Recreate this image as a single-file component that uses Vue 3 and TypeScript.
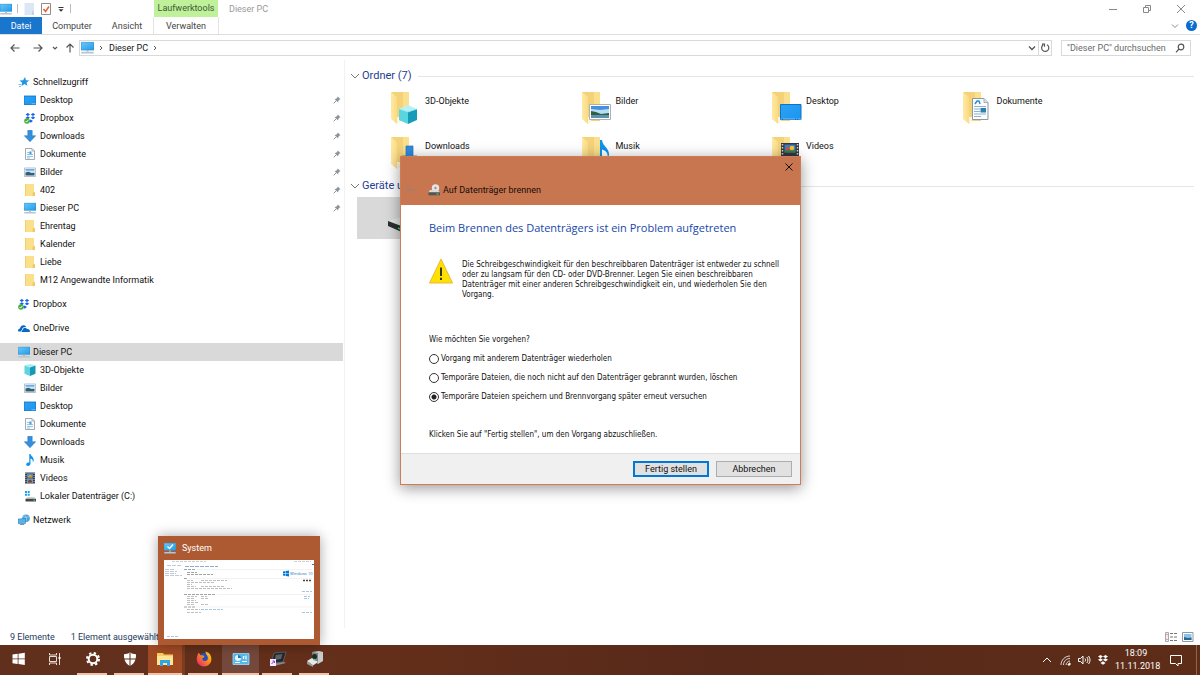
<script setup lang="ts">
import { ref } from 'vue'

interface TreeItem {
  label: string
  icon: string
  root?: boolean
  gap?: boolean
  pinned?: boolean
  selected?: boolean
}

const tree: TreeItem[] = [
  { label: 'Schnellzugriff', icon: 'star', root: true },
  { label: 'Desktop', icon: 'desktop', pinned: true },
  { label: 'Dropbox', icon: 'dropbox', pinned: true },
  { label: 'Downloads', icon: 'download', pinned: true },
  { label: 'Dokumente', icon: 'document', pinned: true },
  { label: 'Bilder', icon: 'picture', pinned: true },
  { label: '402', icon: 'folder', pinned: true },
  { label: 'Dieser PC', icon: 'pc', pinned: true },
  { label: 'Ehrentag', icon: 'folder' },
  { label: 'Kalender', icon: 'folder' },
  { label: 'Liebe', icon: 'folder' },
  { label: 'M12 Angewandte Informatik', icon: 'folder' },
  { label: 'Dropbox', icon: 'dropbox', root: true, gap: true },
  { label: 'OneDrive', icon: 'onedrive', root: true, gap: true },
  { label: 'Dieser PC', icon: 'pc', root: true, gap: true, selected: true },
  { label: '3D-Objekte', icon: 'cube' },
  { label: 'Bilder', icon: 'picture' },
  { label: 'Desktop', icon: 'desktop' },
  { label: 'Dokumente', icon: 'document' },
  { label: 'Downloads', icon: 'download' },
  { label: 'Musik', icon: 'music' },
  { label: 'Videos', icon: 'video' },
  { label: 'Lokaler Datenträger (C:)', icon: 'drive' },
  { label: 'Netzwerk', icon: 'network', root: true, gap: true },
]

const folders = [
  { label: '3D-Objekte', icon: 'big-cube' },
  { label: 'Bilder', icon: 'big-picture' },
  { label: 'Desktop', icon: 'big-desktop' },
  { label: 'Dokumente', icon: 'big-document' },
  { label: 'Downloads', icon: 'big-download' },
  { label: 'Musik', icon: 'big-music' },
  { label: 'Videos', icon: 'big-video' },
]

const apps = [
  { label: 'Einstellungen', icon: 'gear', state: 'open' },
  { label: 'Windows Defender', icon: 'shield', state: 'open' },
  { label: 'Explorer', icon: 'explorer', state: 'open hot' },
  { label: 'Firefox', icon: 'firefox', state: 'open' },
  { label: 'System', icon: 'control', state: 'open lit' },
  { label: 'Tablet', icon: 'tablet', state: 'open' },
  { label: 'Brenner', icon: 'burner', state: 'open' },
]

const options = [
  'Vorgang mit anderem Datenträger wiederholen',
  'Temporäre Dateien, die noch nicht auf den Datenträger gebrannt wurden, löschen',
  'Temporäre Dateien speichern und Brennvorgang später erneut versuchen',
]
const choice = ref(2)
const query = ref('')
</script>

<template>
  <div class="screen">
    <svg class="defs" aria-hidden="true">
      <defs>
        <linearGradient id="g-blue" x1="0" y1="0" x2="1" y2="1">
          <stop offset="0" stop-color="#2ba2f5" /><stop offset="1" stop-color="#1b95ef" />
        </linearGradient>
        <linearGradient id="g-pc" x1="0" y1="0" x2="1" y2="1">
          <stop offset="0" stop-color="#6cc8fa" /><stop offset="1" stop-color="#1e9bea" />
        </linearGradient>
        <linearGradient id="g-flap" x1="0" y1="0" x2="1" y2="0">
          <stop offset="0" stop-color="#ffe9a2" /><stop offset="1" stop-color="#fadb85" />
        </linearGradient>
        <linearGradient id="g-fox" x1="1" y1="0" x2="0" y2="1">
          <stop offset="0" stop-color="#ffe226" /><stop offset=".45" stop-color="#ff8a16" /><stop offset="1" stop-color="#e31587" />
        </linearGradient>
      </defs>
      <symbol id="star" viewBox="0 0 12 12"><path d="M7 1l1 3.2 3.3.2-2.7 2 .8 3.4-2.900-1.900L3.500 10l.6-3.200L1.500 4.500l3.600-.2z" fill="#2196e8" /><path d="M.5 8.500h3M1 10.500h2" stroke="#7fc0f0" /></symbol>
      <symbol id="desktop" viewBox="0 0 12 12"><rect y="2" width="12" height="8.500" fill="url(#g-blue)" /><path d="M0 2h12v8.500H0z" fill="none" stroke="#0a6fc2" stroke-width=".8" /><path d="M7.500 9.700h4" stroke="#a9dcff" stroke-width=".6" /></symbol>
      <symbol id="dropbox" viewBox="0 0 12 12"><path d="M3.800 1l2.200 1.500-2.200 1.400L1.600 2.500zM9 1l2.200 1.500L9 3.900 6.800 2.500zM3.800 4.200L6 5.700 3.800 7.200 1.600 5.700zM9 4.200l2.200 1.500L9 7.200 6.800 5.700zM6.600 7.600L9 9 6.600 10.800 4.800 9z" fill="#1561f5" /><circle cx="3" cy="9" r="2.800" fill="#45ae3d" /><path d="M1.600 9l1 1.100 1.800-2.300" stroke="#fff" fill="none" stroke-width=".9" /></symbol>
      <symbol id="download" viewBox="0 0 12 12"><path d="M3.800.3h4.400v5.400h3.500L6 11.800.3 5.700h3.500z" fill="#348fdd" stroke="#2374bd" stroke-width=".5" /></symbol>
      <symbol id="document" viewBox="0 0 12 12"><path d="M1.500.5h6.500l2.500 2.500v8.500h-9z" fill="#f8fafb" stroke="#8e979d" stroke-width=".8" /><path d="M8 .5V3h2.500" fill="none" stroke="#8e979d" stroke-width=".6" /><path d="M3 4.500h3M3 6.500h6M3 8.500h6M3 10h3" stroke="#8cc3e4" stroke-width=".9" /><path d="M5.500 3.500h2v3h-2z" fill="#4a9fd3" /></symbol>
      <symbol id="picture" viewBox="0 0 12 12"><path d="M.4 2h11.200v8.500H.4z" fill="#fff" stroke="#a7adb3" stroke-width=".8" /><path d="M1.500 3.200h9v6.200h-9z" fill="#cbe5fa" /><path d="M1.500 3.200h9v1.300h-9z" fill="#4d9de5" /><path d="M1.500 6.500l3-.8 3 1.300 3-.3v2.700h-9z" fill="#335f72" /></symbol>
      <symbol id="folder" viewBox="0 0 12 12"><path d="M1 0h9v8l1 1v3H1z" fill="#fbe08c" /><path d="M10 7.500l1 1V12h-2.500V9z" fill="#efc964" /><path d="M1 0h1v12H1z" fill="#f2cf72" /></symbol>
      <symbol id="pc" viewBox="0 0 12 12"><path d="M0 1h12v7.500H0z" fill="url(#g-pc)" /><path d="M.2 1.200h11.600v7.100H.2z" stroke="#3183b8" stroke-width=".4" fill="none" /><path d="M5 8.500h2v1.200H5z" fill="#9db4c4" /><path d="M.5 10h11l.5 1.500H0z" fill="#b7c5d0" /></symbol>
      <symbol id="onedrive" viewBox="0 0 12 12"><path d="M.3 9.500C-.4 7.700.7 6.600 2 6.500 2.200 4 4.800 2.500 7 3.800c.8.500 1 .9 1.200 1.200C5.800 4.600 4 5.900 4 8c-1.200.4-1.200 1.200-1 1.500z" fill="#0868c4" /><path d="M3.800 10c-.8-1.200 0-2 1-2.100C5 5.700 7.800 5 9 7c1.900-.3 2.800.9 2.900 1.900.1.700-.3 1.100-.8 1.100z" fill="#0868c4" /></symbol>
      <symbol id="cube" viewBox="0 0 12 12"><path d="M.5 1.500L6 0l5.500 1.500L6 3.500z" fill="#a9edf2" /><path d="M.5 1.500L6 3.500V12L.5 9.800z" fill="#5fd3df" /><path d="M11.500 1.500L6 3.500V12l5.500-2.200z" fill="#1599b4" /></symbol>
      <symbol id="music" viewBox="0 0 12 12"><path d="M5.300 0h1.200c.2 2 3.300 2.900 3.200 6.200-.1 1-.4 1.700-.9 2.300.4-2.500-.7-3.500-2.300-4V9.500c0 1.300-1.100 2.400-2.500 2.400-1.300 0-2-.9-1.800-1.900.3-1.100 1.800-1.900 3.100-1.500z" fill="#0c94ec" /></symbol>
      <symbol id="video" viewBox="0 0 12 12"><path d="M1 .5h10v11H1z" fill="#3c4147" /><path d="M1.900 1v10M10.100 1v10" stroke="#c8ccd0" stroke-width="1" stroke-dasharray="1 1" /><path d="M3 1.200h6v4.300H3z" fill="#4f88c6" /><path d="M3 6.300h6V11H3z" fill="#7a94b5" /><path d="M4 4l2-1.500 2 1.500v1.500H4z" fill="#c9a435" /><path d="M4 9l2-1.500 2 1.500v1.500H4z" fill="#6d4c37" /></symbol>
      <symbol id="drive" viewBox="0 0 12 12"><path d="M1 1h2v2H1zM3.700 1h2v2h-2zM1 3.700h2v2H1zM3.700 3.700h2v2h-2z" fill="#15a3f0" /><path d="M3 7h7.500l1.500 2.300H1.500z" fill="#cfd3d5" /><path d="M1.500 8.800H12v2.700H1.500z" fill="#42474a" /><path d="M9.500 10.200h1.500" stroke="#3eea68" /></symbol>
      <symbol id="network" viewBox="0 0 12 12"><circle cx="8" cy="4.200" r="3.800" fill="#4e9fd4" /><path d="M5 2.500c2 1.500 4 .5 6 .2M6.500 1c3 3 2 5 1 6.500" stroke="#bfe2f7" stroke-width=".6" fill="none" /><path d="M0 5l7.500-.5v5L0 9.500z" fill="#52b4ee" stroke="#2b75a8" stroke-width=".5" /><path d="M1.500 11h5l-.8-1.500H2.500z" fill="#7a97aa" /></symbol>

      <symbol id="big-folder" viewBox="0 0 32 34"><path d="M2 1h18v29H7z" fill="#f3d27a" /><path d="M14 1h6v17l-6 10z" fill="#fbdf8d" /><path d="M8 26h3v5l-3 2z" fill="#fdf5dd" /><path d="M2 1l6 5v27l-6-5z" fill="url(#g-flap)" /></symbol>
      <symbol id="big-cube" viewBox="0 0 32 34"><path d="M10 18l9-4 9 4-9 3z" fill="#b8f1f3" /><path d="M10 18l9 3v12l-9-4z" fill="#59d5df" /><path d="M28 18l-9 3v12l9-4z" fill="#169bb8" /><path d="M10 18l9 3 9-3" stroke="#8de9ef" fill="none" stroke-width=".7" /></symbol>
      <symbol id="big-picture" viewBox="0 0 32 34"><path d="M9.500 13.500h21v15h-21z" fill="#fff" stroke="#b0b0b0" /><path d="M11 15h18v12H11z" fill="#b9dcf5" /><path d="M11 15h18v3l-9 1-9-1z" fill="#4591dc" /><path d="M11 20l5 1 5 2 8-1v2H11z" fill="#31603f" /><path d="M11 24h18v3H11z" fill="#5c93b4" /></symbol>
      <symbol id="big-desktop" viewBox="0 0 32 34"><path d="M10.500 13.500h20.500v15H10.500z" fill="url(#g-blue)" stroke="#0a73ca" /><path d="M11 28h20" stroke="#b8dcf4" stroke-dasharray="1 1 12 1" stroke-width=".6" /></symbol>
      <symbol id="big-document" viewBox="0 0 32 34"><path d="M11.500 7.500H23l4 4v17H11.500z" fill="#fbfcfd" stroke="#8e979d" /><path d="M23 7.500v4h4" fill="#dde5ea" stroke="#8e979d" stroke-width=".7" /><path d="M14 13l2-3h2l1 3" stroke="#318ad0" fill="none" stroke-width="1.500" /><path d="M13 15.500h12M13 18h6M13 20.500h6M13 23h12M13 25.500h7" stroke="#80aaca" stroke-width=".9" /><path d="M19.500 17h5.500v4.500h-5.500z" fill="#2e7fb2" /></symbol>
      <symbol id="big-download" viewBox="0 0 32 34"><path d="M17 10h7v10h4L20.500 29 13 20h4z" fill="#318add" stroke="#2272bb" stroke-width=".7" /></symbol>
      <symbol id="big-music" viewBox="0 0 32 34"><path d="M20 4h2c.5 6 7 8 7 14 0 2-.8 3.500-1.500 4.500 1-6-2-8-5.500-9V25c0 3-2.500 5-5 5s-4-1.700-3.500-4c.6-2 3.500-3.200 6.500-2.500z" fill="#0c94ec" /></symbol>
      <symbol id="big-video" viewBox="0 0 32 34"><path d="M11 7h18v22H11z" fill="#33373c" /><path d="M12.500 8v20M27.500 8v20" stroke="#d3d6d9" stroke-dasharray="1.500 1.500" stroke-width="1.500" /><path d="M14.500 8.500h11v8h-11z" fill="#3d7cc5" /><circle cx="18" cy="13" r="2" fill="#db4b37" /><circle cx="22" cy="12" r="2.300" fill="#f0c52c" /><path d="M14.500 15c4-2 7 1 11-1v2.500h-11z" fill="#3d7e3b" /></symbol>

      <symbol id="gear" viewBox="0 0 16 16"><circle cx="8" cy="8" r="4.300" fill="none" stroke="#fff" stroke-width="2" /><circle cx="8" cy="8" r="6" fill="none" stroke="#fff" stroke-width="2" stroke-dasharray="2.350 2.362" /></symbol>
      <symbol id="shield" viewBox="0 0 16 16"><path d="M8 1.500c1.800 1.200 3.800 1.700 6 1.700.2 5.300-1.500 9.500-6 11.800C3.500 12.700 1.800 8.500 2 3.200c2.200 0 4.200-.5 6-1.700z" fill="#fff" /><path d="M8 2v13M2 8h12" stroke="#5c2d1a" stroke-width="1" /></symbol>
      <symbol id="explorer" viewBox="0 0 18 16"><path d="M1 2h6l1 1.500h9V14H1z" fill="#f6cf62" /><path d="M1 5h16v9H1z" fill="#ffe594" /><path d="M4 15V9h10v6h-3v-3H7v3z" fill="#32a6e0" /></symbol>
      <symbol id="firefox" viewBox="0 0 18 18"><circle cx="9.500" cy="8.500" r="6.500" fill="#274fc0" /><path d="M3 2l2.500 3c1.500-.4 3 .1 4 1.500L7 8.500C7 11 9.500 12 11.500 11c2.500-1.300 2.500-5 0-7.200L10.500.5C15 1.500 17.500 5 17.300 9.500 17 14.500 13 17.500 8.700 17.300 4 17 .8 13.500.8 9.200.8 6 2 4 3 2z" fill="url(#g-fox)" /></symbol>
      <symbol id="control" viewBox="0 0 18 16"><path d="M1 2.500h16v11H1z" fill="#54b8ec" stroke="#a5def7" stroke-width=".8" /><circle cx="6" cy="7" r="3" fill="#e8f7ff" /><path d="M6 7V4a3 3 0 0 1 3 3z" fill="#1776c4" /><path d="M11 5.500h1.500M14 4.500v4M11.500 8v-3M3 11.500h5M10 10.500h5" stroke="#fff" stroke-width="1.200" /></symbol>
      <symbol id="tablet" viewBox="0 0 18 16"><path d="M5 2l12-1-3 10-12 1z" fill="#20262c" stroke="#62676b" stroke-width=".8" /><path d="M6.500 4l7-1-1.500 5-6 1z" fill="#5c6164" /><path d="M3 13l12-2 2 1-12 3z" fill="#858b90" /><path d="M1 8h6v7H1z" fill="#f5edff" /><path d="M2.500 13l3-3M3.500 10h2v2" stroke="#923bc4" fill="none" /></symbol>
      <symbol id="burner" viewBox="0 0 18 16"><path d="M6 1l7-1 4 1v9l-5 3-6-4z" fill="#c9cccd" /><path d="M6 1l6 1v11L6 9z" fill="#7d8385" /><path d="M1 10l5-3 6 4-5 3.500z" fill="#e8e8e8" /><path d="M1 10l6 4v2l-6-3z" fill="#989c9e" /><circle cx="8.500" cy="5.500" r="2.500" fill="#222a29" /><path d="M7 8.500l3 1" stroke="#3bd867" /></symbol>
    </svg>

    <header class="chrome">
      <div class="caption">
        <div class="quick">
          <svg class="i12"><use href="#pc" /></svg><i class="sep" />
          <svg class="i12" viewBox="0 0 12 12"><path d="M1.500 0H11v12H1.500z" fill="#dbe7f5" /><path d="M9 7l2 2v3H9z" fill="#bfd2e8" /></svg>
          <svg class="i12" viewBox="0 0 12 12"><path d="M1.500.5h9v11h-9z" fill="#fff" stroke="#8d8d8d" /><path d="M3.500 6l2 2.500L9 3.500" fill="none" stroke="#e2642f" stroke-width="1.500" /></svg>
          <svg class="i8" viewBox="0 0 8 8"><path d="M1.500 2.500h5" stroke="#333" /><path d="M1.500 4.200h5L4 6.800z" fill="#333" /></svg><i class="sep" />
        </div>
        <div class="tool-tab">Laufwerktools</div>
        <div class="title">Dieser PC</div>
        <div class="winbtns">
          <button aria-label="Minimieren"><svg viewBox="0 0 10 10"><path d="M1 5.500h8" /></svg></button>
          <button aria-label="Wiederherstellen"><svg viewBox="0 0 10 10"><path d="M1.500 3.500h5v5h-5zM3.500 3.500v-2h5v5h-2" /></svg></button>
          <button aria-label="Schließen"><svg viewBox="0 0 10 10"><path d="M1 1l8 8M9 1L1 9" /></svg></button>
        </div>
      </div>
      <nav class="ribbon">
        <button class="tab-file">Datei</button>
        <button class="tab-computer">Computer</button>
        <button class="tab-view">Ansicht</button>
        <button class="tab-manage">Verwalten</button>
        <span class="grow" />
        <svg class="i8 expand" viewBox="0 0 8 8"><path d="M1 2.500l3 3 3-3" fill="none" stroke="#888" /></svg>
        <button class="help" aria-label="Hilfe">?</button>
      </nav>
      <div class="address">
        <button class="nav" aria-label="Zurück"><svg viewBox="0 0 10 10"><path d="M9.500 5H1M4.500 1.500L1 5l3.500 3.500" /></svg></button>
        <button class="nav" aria-label="Vorwärts"><svg viewBox="0 0 10 10"><path d="M.5 5H9M5.500 1.500L9 5 5.500 8.500" /></svg></button>
        <button class="nav small" aria-label="Verlauf"><svg viewBox="0 0 10 10"><path d="M3 4l2 2 2-2" /></svg></button>
        <button class="nav up" aria-label="Nach oben"><svg viewBox="0 0 10 10"><path d="M5 9.500V1M1.500 4.500L5 1l3.500 3.500" /></svg></button>
        <div class="path">
          <svg class="i13"><use href="#pc" /></svg>
          <svg class="i8" viewBox="0 0 8 8"><path d="M3 2l2 2-2 2" fill="none" stroke="#555" /></svg>
          <span class="crumb">Dieser PC</span>
          <svg class="i8" viewBox="0 0 8 8"><path d="M3 2l2 2-2 2" fill="none" stroke="#555" /></svg>
          <span class="grow" />
          <svg class="i8 drop" viewBox="0 0 8 8"><path d="M1 2.500l3 3 3-3" fill="none" stroke="#555" stroke-width="1.300" /></svg>
          <button class="reload" aria-label="Aktualisieren"><svg viewBox="0 0 10 10"><path d="M7 1.700A3.600 3.600 0 1 1 3 2M2 1.200h2.500v2.500" /></svg></button>
        </div>
        <label class="search">
          <input v-model="query" type="text" aria-label="Durchsuchen" placeholder="&quot;Dieser PC&quot; durchsuchen">
          <svg viewBox="0 0 10 10"><circle cx="6" cy="4" r="2.800" /><path d="M4 6L1 9.300" /></svg>
        </label>
      </div>
    </header>

    <div class="body">
      <ul class="tree">
        <li v-for="(t, n) in tree" :key="n" :class="{ root: t.root, gap: t.gap, selected: t.selected }">
          <svg class="i12"><use :href="'#' + t.icon" /></svg>
          <span>{{ t.label }}</span>
          <svg v-if="t.pinned" class="pin" viewBox="0 0 8 8"><path d="M4.800.5l2.700 2.700-.9.400L5.300 5l-.2 1.600L1.500 3l1.600-.3L4.400 1.400z" fill="#8a949c" /><path d="M3.300 4.700L.7 7.300" stroke="#8a949c" /></svg>
        </li>
      </ul>
      <main class="content">
        <section>
          <h2><svg class="i8" viewBox="0 0 8 8"><path d="M0 2l4 4 4-4" fill="none" stroke="#777" /></svg>Ordner (7)<i /></h2>
          <div class="folders">
            <div v-for="f in folders" :key="f.label" class="tile">
              <svg viewBox="0 0 32 34"><use href="#big-folder" /><use :href="'#' + f.icon" /></svg>
              <span>{{ f.label }}</span>
            </div>
          </div>
        </section>
        <section>
          <h2><svg class="i8" viewBox="0 0 8 8"><path d="M0 2l4 4 4-4" fill="none" stroke="#777" /></svg>Geräte und<i /></h2>
          <div class="device">
            <svg viewBox="0 0 34 20"><path d="M1 5l14-4 16 5-14 6z" fill="#e4e6e7" /><path d="M1 5l16 6v6L1 10z" fill="#2b2f31" /><path d="M17 11l14-5v5l-14 6z" fill="#777" /><path d="M11 12l2 1" stroke="#31d34c" stroke-width="1.500" /></svg>
          </div>
        </section>
      </main>
    </div>

    <footer class="status">
      <span>9 Elemente</span><span class="chosen">1 Element ausgewählt</span><span class="grow" />
      <svg class="mode" viewBox="0 0 12 10"><path d="M.5.5h3v9h-3z" fill="#eee" stroke="#aaa" /><path d="M1.500 2.500h1M1.500 7.500h1" stroke="#d55" /><path d="M5 1.500h3M9 1.500h3M5 5h3M9 5h3M5 8.500h3M9 8.500h3" stroke="#777" /></svg>
      <svg class="mode" viewBox="0 0 12 10"><path d="M.5.5h10.500v9H.5z" fill="#fff" stroke="#8a9aa8" /><path d="M2 2h7.500v6H2z" fill="#8ac4ee" /><path d="M2 5l4 1 3.500-.5V8H2z" fill="#2f6588" /></svg>
    </footer>

    <footer class="taskbar">
      <button class="task" aria-label="Start"><svg viewBox="0 0 18 16"><path d="M2.500 3.600l5.200-.8v4.700H2.500zM8.500 2.700l6.300-.9v5.700H8.500zM2.500 8.300h5.200V13l-5.200-.7zM8.500 8.300h6.300V14l-6.300-.9z" fill="#fff" /></svg></button>
      <button class="task" aria-label="Aufgabenansicht"><svg viewBox="0 0 18 16"><path d="M2.500 5.500h7v5h-7zM2.500 2v2h7V2M2.500 14v-2h7v2M12.500 2v12" fill="none" stroke="#e6dcd8" /><path d="M11.500 6h2v2h-2z" fill="#fff" /></svg></button>
      <button v-for="a in apps" :key="a.label" :class="['task', a.state]" :aria-label="a.label"><svg><use :href="'#' + a.icon" /></svg></button>
      <span class="grow" />
      <div class="tray">
        <svg class="t12" viewBox="0 0 12 12"><path d="M2 8l4-4 4 4" /></svg>
        <svg class="t12" viewBox="0 0 12 12"><path d="M2 11C2 6 6 2 11 2M4.500 11c0-4 3-6.500 6.500-6.500M7 11c0-2 2-4 4-4" opacity=".8" /><path d="M9 11c0-1 1-2 2-2v2z" fill="#fff" /></svg>
        <svg class="t14" viewBox="0 0 14 12"><path d="M1.500 4.500h2l2.500-2.500v8l-2.500-2.500h-2zM8 4.500c.8 1 .8 2 0 3M9.800 3c1.500 2 1.500 4 0 6M11.500 2c2 3 2 5.500 0 8" /></svg>
        <svg class="t12" viewBox="0 0 12 12"><path d="M3.500 1L6 2.600 3.500 4.200 1 2.600zM8.500 1L11 2.600 8.500 4.200 6 2.600zM3.500 4.200L6 5.800 3.500 7.400 1 5.800zM8.500 4.200L11 5.800 8.500 7.400 6 5.800zM6 7.200L8.500 9 6 10.800 3.500 9z" fill="#fff" stroke="none" /></svg>
        <div class="clock"><span>18:09</span><span>11.11.2018</span></div>
        <svg class="t14 action" viewBox="0 0 14 14"><path d="M1.500 2.500h11v8H9v2.500l-2.500-2.500h-5z" /></svg>
        <i class="edge" />
      </div>
    </footer>

    <aside class="preview">
      <div class="preview-title"><svg viewBox="0 0 12 12"><use href="#pc" /><path d="M3.500 4.500l2 2 3.500-4" fill="none" stroke="#fff" stroke-width="1.200" /></svg>System</div>
      <svg class="shot" viewBox="0 0 150 79">
        <path d="M0 0h150v79H0z" fill="#fff" />
        <path d="M8 1.500h34M130 1.500h17" stroke="#bbb" stroke-width=".7" stroke-dasharray="3 1" />
        <path d="M148 4h2v1h-2z" fill="#1976c8" />
        <path d="M3 5.500h15M1 9.500h10M1 11.500h12M1 13.500h11M1 15.500h17" stroke="#a3b3c6" stroke-width=".7" stroke-dasharray="4 1" />
        <path d="M21 6.500h33" stroke="#6d94cc" stroke-width=".8" stroke-dasharray="4 1" />
        <path d="M20 9.500h12M23 12.500h10M23 14.500h26M20 18.500h4M20 34.500h32M20 47h11" stroke="#8c8c8c" stroke-width=".8" stroke-dasharray="3 1" />
        <path d="M23 20.500h6M37 20.500h26M23 22.500h28M23 24.500h5M23 26.500h9M37 26.500h23M23 28.500h45M23 36.500h10M37 36.500h6M23 38.500h8M37 38.500h7M23 40.500h9M23 42.500h12M23 44.500h7M37 44.500h7M23 49.500h13M23 52.500h14" stroke="#a5a5a5" stroke-width=".7" stroke-dasharray="3 1" />
        <path d="M37 49.500h22M138 31.500h10M140 36.500h6M140 38.500h5M138 52.500h10M3 76.500h12" stroke="#7fadda" stroke-width=".7" stroke-dasharray="3 1" />
        <path d="M33 9.500h115M25 18.500h123M53 34.500h95M32 47h116" stroke="#e5e5e5" stroke-width=".5" />
        <path d="M139 20.500h9" stroke="#444" stroke-width="1.300" stroke-dasharray="2 1" />
        <path d="M119 11.500l2.500-.4v2.200H119zM122 11l3-.5v2.800h-3zM119 13.800h2.500V16l-2.500-.4zM122 13.800h3v2.800l-3-.5z" fill="#0078d7" />
        <text x="126" y="15" class="wintext">Windows 10</text>
      </svg>
    </aside>

    <div class="dialog" role="dialog" aria-labelledby="dlg-title">
      <div class="dialog-head">
        <button class="close" aria-label="Schließen"><svg viewBox="0 0 10 10"><path d="M1.500 1.500l7 7M8.500 1.500l-7 7" /></svg></button>
        <div class="dialog-name">
          <svg class="back" viewBox="0 0 10 10"><path d="M9.500 5H1M4.500 1.500L1 5l3.500 3.500" fill="none" stroke="#9c7f70" /></svg>
          <svg class="disc" viewBox="0 0 12 12"><circle cx="7.500" cy="4" r="3.700" fill="#e6e6e6" /><circle cx="7.500" cy="4" r="1.200" fill="#a88" /><path d="M2 6h8l2 2.500H.5z" fill="#d8dada" /><path d="M.5 8.300H12v3H.5z" fill="#505658" /><path d="M8.500 10h2" stroke="#44e46a" /></svg>
          <span id="dlg-title">Auf Datenträger brennen</span>
        </div>
      </div>
      <div class="dialog-body">
        <h1>Beim Brennen des Datenträgers ist ein Problem aufgetreten</h1>
        <div class="warning">
          <svg viewBox="0 0 24 26"><path d="M12 1L23.500 25H.5z" fill="#ffe100" stroke="#eab73c" stroke-linejoin="round" /><path d="M12 9.500v8.500M12 19.800v2.200" stroke="#222" stroke-width="1.800" /></svg>
          <p>Die Schreibgeschwindigkeit für den beschreibbaren Datenträger ist entweder zu schnell<br>oder zu langsam für den CD- oder DVD-Brenner. Legen Sie einen beschreibbaren<br>Datenträger mit einer anderen Schreibgeschwindigkeit ein, und wiederholen Sie den<br>Vorgang.</p>
        </div>
        <fieldset>
          <legend>Wie möchten Sie vorgehen?</legend>
          <label v-for="(o, n) in options" :key="n"><input v-model="choice" type="radio" name="next-step" :value="n">{{ o }}</label>
        </fieldset>
        <p class="hint">Klicken Sie auf "Fertig stellen", um den Vorgang abzuschließen.</p>
      </div>
      <div class="dialog-foot">
        <button class="primary">Fertig stellen</button>
        <button>Abbrechen</button>
      </div>
    </div>
  </div>
</template>

<style>
html, body { margin: 0; }
</style>

<style scoped>
* { box-sizing: border-box; }
.screen { position: relative; display: flex; flex-direction: column; height: 100vh; overflow: hidden; background: #fff; color: #111; font: 9px/18px Roboto, "Open Sans", sans-serif; }
.defs { position: absolute; width: 0; height: 0; }
button { padding: 0; border: 0; background: none; color: inherit; font: inherit; }
svg { display: block; flex: none; }
.grow { flex: 1; }
.i8 { width: 8px; height: 8px; }
.i12 { width: 12px; height: 12px; }
.i13 { width: 13px; height: 13px; }

.caption { display: flex; height: 17px; }
.quick { display: flex; align-items: center; gap: 5px; width: 154px; }
.quick .sep { width: 1px; height: 9px; background: #bbb; }
.tool-tab { width: 64px; background: #bff09a; color: #3d5a35; text-align: center; line-height: 16px; }
.title { flex: 1; padding-left: 11px; color: #999; }
.winbtns { display: flex; gap: 24px; padding-right: 14px; }
.winbtns svg { width: 10px; height: 10px; fill: none; stroke: #888; stroke-width: 1; }
.ribbon { display: flex; align-items: center; height: 18px; padding-right: 3px; border-bottom: 1px solid #dedede; color: #444; }
.ribbon button { height: 17px; line-height: 18px; }
.ribbon .tab-file { width: 42px; background: #1a75cc; color: #fff; }
.ribbon .tab-computer { width: 60px; }
.ribbon .tab-view { width: 50px; }
.ribbon .tab-manage { width: 66px; margin-left: 1px; border: solid #e4e4e4; border-width: 0 1px; }
.ribbon .expand { margin-right: 7px; }
.ribbon .help { width: 11px; height: 11px; border-radius: 50%; background: #0a6cce; color: #fff; font-weight: 700; line-height: 11px; }
.address { display: flex; align-items: center; height: 25px; padding: 0 9px 0 3px; }
.nav { width: 23px; }
.nav.small { width: 12px; }
.nav.up { width: 18px; }
.nav svg, .reload svg { width: 10px; height: 10px; margin: auto; fill: none; stroke: #555; stroke-width: 1.2; }
.path { display: flex; align-items: center; flex: 1; height: 16px; padding-left: 1px; border: 1px solid #d9d9d9; }
.path .i8 { margin-left: 3px; }
.crumb { margin: 0 0 0 4px; }
.path .drop { margin-right: 2px; }
.reload { width: 13px; height: 14px; border-left: 1px solid #d9d9d9; }
.search { display: flex; align-items: center; width: 130px; height: 16px; margin-left: 9px; padding: 0 5px; border: 1px solid #d9d9d9; }
.search input { flex: 1; min-width: 0; padding: 0; border: 0; outline: 0; background: none; color: #555; font: inherit; }
.search input::placeholder { color: #6a6a6a; opacity: 1; }
.search svg { width: 10px; height: 10px; fill: none; stroke: #555; stroke-width: 1.2; }

.body { display: flex; flex: 1; min-height: 0; }
.tree { width: 345px; margin: 0; padding: 13px 1px 0 0; border-right: 1px solid #f2f2f2; list-style: none; }
.tree li { display: flex; align-items: center; gap: 4px; height: 18px; padding: 0 2px 0 24px; }
.tree li.root { gap: 3px; padding-left: 18px; }
.tree li.gap { margin-top: 6px; }
.tree li.selected { background: #d9d9d9; }
.pin { width: 8px; height: 8px; margin-left: auto; }
.content { flex: 1; min-width: 0; padding: 6px 6px 0; }
h2 { display: flex; align-items: center; margin: 0; height: 20px; color: #263d91; font: 11px/20px Roboto, "Open Sans", sans-serif; }
h2 svg { margin-right: 3px; }
h2 i { flex: 1; height: 1px; margin-left: 6px; background: #e5e5e5; }
.folders { display: grid; grid-template-columns: repeat(4, 1fr); grid-auto-rows: 45px; max-width: 762px; margin: 5px 0 0 38px; }
.tile { display: flex; gap: 4px; }
.tile svg { width: 32px; height: 34px; }
.tile span { margin-top: 1px; }
.device { display: flex; align-items: center; width: 187px; height: 42px; margin: 1px 0 0 6px; padding: 16px 0 0 30px; background: #d9d9d9; }
section + section { margin-top: -5px; }
.device svg { width: 34px; height: 20px; }
.status { display: flex; align-items: center; height: 17px; padding: 0 6px 0 10px; color: #243b5c; }
.status .chosen { margin-left: 16px; }
.mode { width: 12px; height: 10px; margin-left: 5px; }

.taskbar { display: flex; height: 30px; background: linear-gradient(90deg, #60301d, #642f1a 30%, #57291a 60%, #5d2d18); color: #fff; }
.task { width: 37px; border-bottom: 2px solid transparent; background-clip: padding-box; }
.task svg { width: 18px; height: 16px; margin: auto; }
.task.open { position: relative; }
.task.open::after { content: ""; position: absolute; inset: auto 4px -2px 3px; height: 2px; background: #f3c2a6; }
.task.hot { background: #a04a24; background-clip: border-box; border-right: 3px solid #7b3c22; }
.task.hot::after { inset: auto 0 -2px 0; }
.task.lit { background: #74483a; background-clip: border-box; }
.task.lit::after { inset: auto 0 -2px 0; }
.tray { display: flex; align-items: center; gap: 6px; }
.tray svg { fill: none; stroke: #fff; stroke-width: 1; }
.t12 { width: 12px; height: 12px; }
.t14 { width: 14px; height: 12px; }
.clock { display: flex; flex-direction: column; width: 42px; line-height: 13px; text-align: center; }
.tray .action { height: 14px; margin-left: 6px; }
.edge { width: 1px; height: 30px; margin-left: 7px; margin-right: 3px; background: #91644f; }

.preview { position: absolute; left: 158px; bottom: 30px; width: 162px; padding: 0 6px 6px; background: #ad5a33; box-shadow: 0 0 12px rgba(0, 0, 0, .35); color: #fff; }
.preview-title { display: flex; align-items: center; gap: 6px; height: 24px; }
.preview-title svg { width: 12px; height: 12px; }
.shot { width: 150px; height: 79px; }
.wintext { fill: #2478bd; font: 4px "Open Sans", sans-serif; }

.dialog { position: absolute; left: 400px; top: 156px; width: 401px; border: 1px solid #cf7b56; background: #fff; box-shadow: 0 3px 14px rgba(0, 0, 0, .42); }
.dialog-head { display: flex; flex-direction: column; height: 48px; background: #c77650; color: #160c08; }
.close { align-self: flex-end; width: 22px; height: 20px; }
.close svg { width: 10px; height: 10px; margin: auto; fill: none; stroke: #111; }
.dialog-name { display: flex; align-items: center; height: 26px; padding-left: 5px; }
.dialog-name .back { width: 10px; height: 10px; margin-right: 12px; }
.disc { width: 12px; height: 12px; margin-right: 3px; }
.dialog-body { height: 248px; padding: 13px 18px 0 28px; color: #111; font: 8px/10px "DejaVu Sans Condensed", "DejaVu Sans", sans-serif; }
h1 { margin: 0; color: #1648a8; font: 11px/20px "Open Sans", "Noto Sans", sans-serif; }
.warning { display: flex; gap: 9px; height: 72px; margin-top: 20px; }
.warning svg { width: 24px; height: 26px; }
p { margin: 0; white-space: nowrap; }
.warning p { margin-top: 2px; }
fieldset { margin: 0; padding: 0; border: 0; }
legend { padding: 0; line-height: 20px; }
fieldset label { display: flex; align-items: center; gap: 2px; height: 18px; margin-top: 1px; white-space: nowrap; }
fieldset legend + label { margin-top: 0; }
input[type="radio"] { appearance: none; width: 10px; height: 10px; margin: 0; border: 1px solid #333; border-radius: 50%; background: #fff; }
input[type="radio"]:checked { background: radial-gradient(circle, #222 0 2px, #fff 3px); }
.hint { margin-top: 24px; }
.dialog-foot { display: flex; align-items: center; justify-content: flex-end; gap: 7px; height: 31px; padding: 0 8px; border-top: 1px solid #dfdfdf; background: #f0f0f0; color: #111; }
.dialog-foot button { width: 76px; height: 16px; border: 1px solid #adadad; background: #e1e1e1; line-height: 14px; }
.dialog-foot .primary { border: 2px solid #0078d7; line-height: 12px; }
</style>
